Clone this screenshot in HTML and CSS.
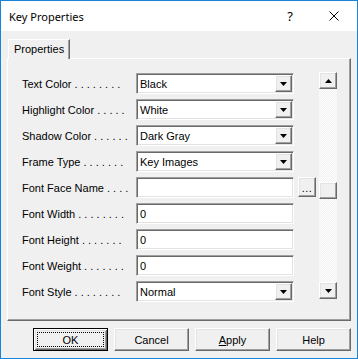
FILE: index.html
```html
<!DOCTYPE html>
<html lang="en">
<head>
<meta charset="UTF-8" />
<title>Key Properties</title>
<link rel="stylesheet" href="styles.css">
</head>
<body>
<div class="window">
    <!-- ==========  TITLE BAR  ========== -->
    <div class="titlebar">
        <span class="title">Key Properties</span>
        <span class="tb-btn help">?</span>
        <span class="tb-btn close">
            <svg width="10" height="10" viewBox="0 0 10 10"><path d="M0.5 0.5 L9.5 9.5 M9.5 0.5 L0.5 9.5" stroke="#000" stroke-width="1" fill="none"/></svg>
        </span>
    </div>

    <div class="body">
        <div class="tabs"><div class="tab">Properties</div></div>

        <!-- ==========  PROPERTY PAGE  ========== -->
        <div class="panel">
            <div class="fields">
                <span class="label">Text Color <span class="dots">. . . . . . . .</span></span>
                <div class="combo sunken"><span class="value">Black</span><span class="drop raised"><svg width="7" height="4"><path d="M0 0 H7 L3.5 4 Z" fill="#000"/></svg></span></div>

                <span class="label">Highlight Color <span class="dots">. . . . .</span></span>
                <div class="combo sunken"><span class="value">White</span><span class="drop raised"><svg width="7" height="4"><path d="M0 0 H7 L3.5 4 Z" fill="#000"/></svg></span></div>

                <span class="label">Shadow Color <span class="dots">. . . . . .</span></span>
                <div class="combo sunken"><span class="value">Dark Gray</span><span class="drop raised"><svg width="7" height="4"><path d="M0 0 H7 L3.5 4 Z" fill="#000"/></svg></span></div>

                <span class="label">Frame Type <span class="dots">. . . . . . .</span></span>
                <div class="combo sunken"><span class="value">Key Images</span><span class="drop raised"><svg width="7" height="4"><path d="M0 0 H7 L3.5 4 Z" fill="#000"/></svg></span></div>

                <span class="label">Font Face Name <span class="dots">. . . .</span></span>
                <div class="edit sunken"></div>
                <span class="browse raised">...</span>

                <span class="label">Font Width <span class="dots">. . . . . . . .</span></span>
                <div class="edit sunken">0</div>

                <span class="label">Font Height <span class="dots">. . . . . . .</span></span>
                <div class="edit sunken">0</div>

                <span class="label">Font Weight <span class="dots">. . . . . . .</span></span>
                <div class="edit sunken">0</div>

                <span class="label">Font Style <span class="dots">. . . . . . . .</span></span>
                <div class="combo sunken"><span class="value">Normal</span><span class="drop raised"><svg width="7" height="4"><path d="M0 0 H7 L3.5 4 Z" fill="#000"/></svg></span></div>
            </div>

            <!-- Vertical scrollbar -->
            <div class="scrollbar">
                <span class="sb-btn raised"><svg width="7" height="4"><path d="M0 4 H7 L3.5 0 Z" fill="#000"/></svg></span>
                <div class="track"><span class="thumb raised"></span></div>
                <span class="sb-btn raised"><svg width="7" height="4"><path d="M0 0 H7 L3.5 4 Z" fill="#000"/></svg></span>
            </div>
        </div>

        <!-- ==========  DIALOG BUTTONS  ========== -->
        <div class="buttons">
            <span class="btn default">OK</span>
            <span class="btn">Cancel</span>
            <span class="btn"><u>A</u>pply</span>
            <span class="btn">Help</span>
        </div>
    </div>
</div>
</body>
</html>
```

FILE: styles.css
```css
/* ========  RESET & THEME  ======== */
*, *::before, *::after { box-sizing: border-box; margin: 0; padding: 0; }
:root {
    --face: #f0f0f0;
    --light: #e3e3e3;
    --shadow: #a0a0a0;
    --dark: #696969;
    --accent: #1883d7;
}
body {
    font-family: "Liberation Sans", Arial, sans-serif;
    font-size: 11px;
    color: #000;
    background: #fff;
}

/* ========  WINDOW FRAME  ======== */
.window {
    width: 358px;
    height: 359px;
    border: 1px solid var(--accent);
    display: flex;
    flex-direction: column;
    background: var(--face);
}
.titlebar {
    height: 30px;
    background: #fff;
    display: flex;
    align-items: center;
}
.title {
    flex: 1;
    padding-left: 8px;
    font-family: "Noto Sans", sans-serif;
    font-size: 11px;
}
.tb-btn {
    width: 46px;
    height: 30px;
    display: flex;
    align-items: center;
    justify-content: center;
}
.help {
    font-family: "Noto Sans", sans-serif;
    font-size: 13px;
    padding-left: 4px;
}

/* ========  3D EDGES  ======== */
.raised {
    background: var(--face);
    border: 1px solid;
    border-color: #fff var(--dark) var(--dark) #fff;
    box-shadow: inset -1px -1px var(--shadow), inset 1px 1px var(--light);
}
.sunken {
    background: #fff;
    border: 1px solid;
    border-color: var(--shadow) #fff #fff var(--shadow);
    box-shadow: inset 1px 1px var(--dark), inset -1px -1px var(--light);
}

/* ========  BODY / TAB  ======== */
.body {
    flex: 1;
    display: flex;
    flex-direction: column;
    padding: 8px 6px 7px;
}
.tabs { display: flex; padding-left: 1px; }
.tab {
    height: 20px;
    line-height: 18px;
    padding: 0 5px;
    background: var(--face);
    border: 1px solid;
    border-color: #fff var(--dark) transparent #fff;
    border-bottom: none;
    box-shadow: inset -1px 0 var(--shadow);
    margin-bottom: -1px;
    position: relative;
    z-index: 1;
}
.panel {
    height: 263px;
    border: 1px solid;
    border-color: #fff var(--dark) var(--dark) #fff;
    box-shadow: inset -1px -1px var(--shadow);
    padding: 12px 0 0 14px;
    display: flex;
    align-items: flex-start;
}

/* Property grid */
.fields {
    margin-top: 2px;
    display: grid;
    grid-template-columns: 110px 158px 18px;
    grid-auto-rows: 21px;
    column-gap: 4px;
    row-gap: 5px;
}
.label {
    grid-column: 1;
    display: flex;
    align-items: center;
    white-space: nowrap;
}
.dots { margin-left: 3px; }
.combo {
    display: flex;
    align-items: center;
}
.combo .value { flex: 1; padding-left: 3px; }
.drop {
    width: 17px;
    height: 17px;
    margin-right: 1px;
    display: flex;
    align-items: center;
    justify-content: center;
}
.edit {
    display: flex;
    align-items: center;
    padding-left: 3px;
}
.browse {
    height: 20px;
    display: flex;
    align-items: center;
    justify-content: center;
    padding-top: 2px;
    letter-spacing: .5px;
}

/* Scrollbar */
.scrollbar {
    margin: 1px 0 0 3px;
    width: 18px;
    height: 227px;
    display: flex;
    flex-direction: column;
}
.sb-btn {
    height: 17px;
    display: flex;
    align-items: center;
    justify-content: center;
}
.track {
    flex: 1;
    background: repeating-conic-gradient(var(--face) 0 25%, #fff 0 50%) 0 0 / 2px 2px;
}
.thumb {
    display: block;
    height: 17px;
    margin-top: 93px;
}

/* ========  DIALOG BUTTONS  ======== */
.buttons {
    margin-top: 7px;
    display: flex;
    justify-content: flex-end;
    gap: 6px;
}
.btn {
    width: 75px;
    height: 23px;
    display: flex;
    align-items: center;
    justify-content: center;
    background: var(--face);
    border: 1px solid;
    border-color: #fff var(--dark) var(--dark) #fff;
    box-shadow: inset -1px -1px var(--shadow), inset 1px 1px var(--light);
}
.btn.default {
    position: relative;
    border-color: #000;
    box-shadow: inset 1px 1px #fff, inset -1px -1px var(--dark),
                inset 2px 2px var(--light), inset -2px -2px var(--shadow);
}
.btn.default::after {
    content: '';
    position: absolute;
    inset: 3px;
    border: 1px dotted #000;
}
```
